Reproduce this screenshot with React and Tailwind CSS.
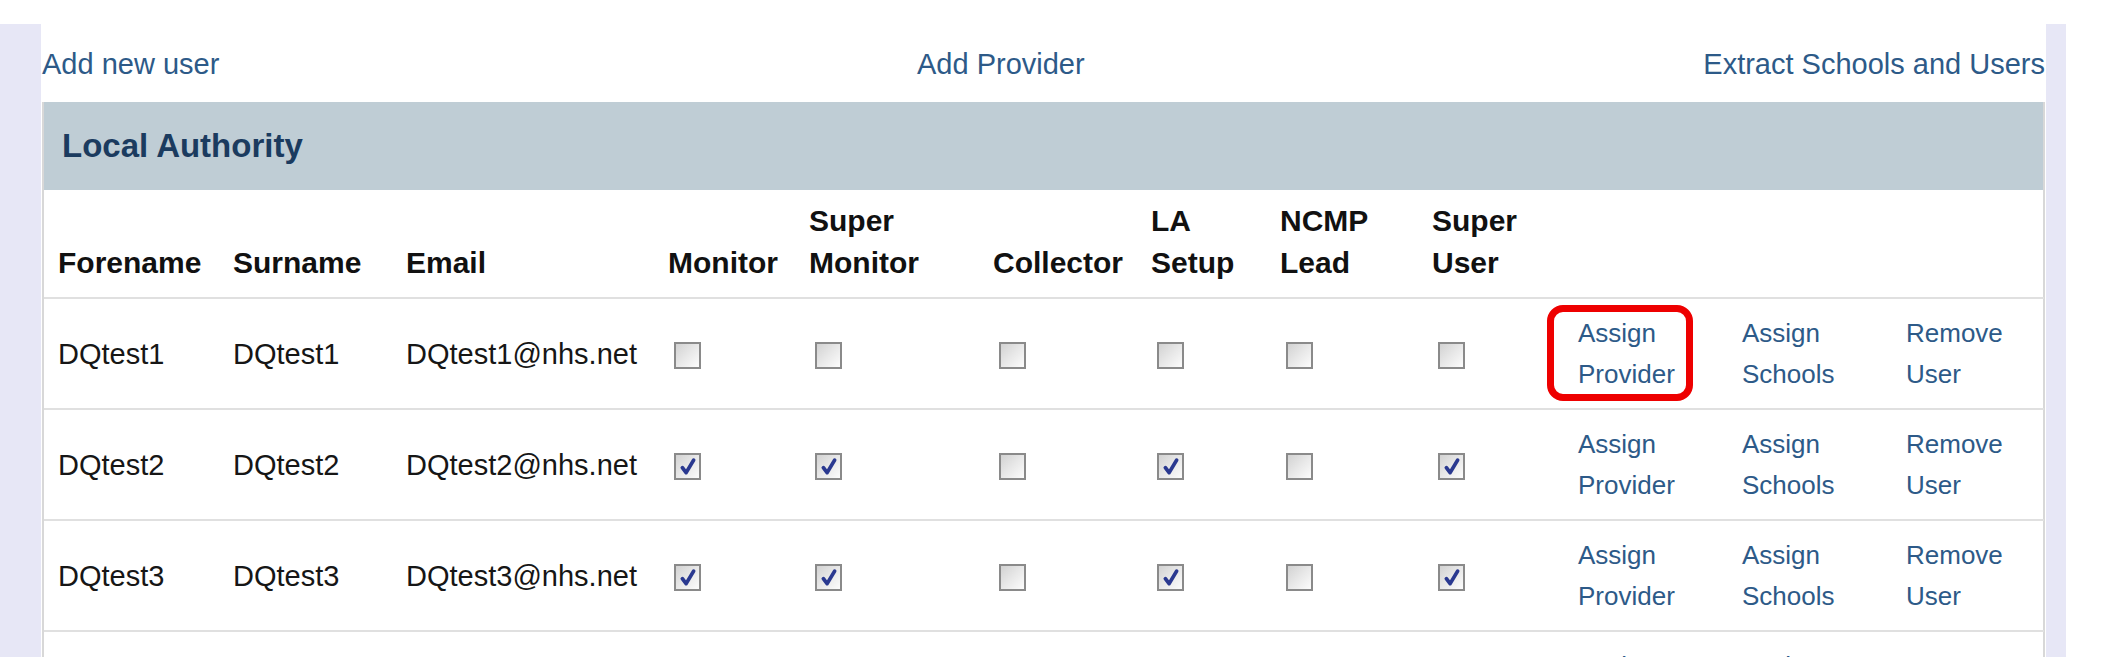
import React from "react";

const users = [
  { name: "DQtest1", flags: [false, false, false, false, false, false], marked: true },
  { name: "DQtest2", flags: [true, true, false, true, false, true] },
  { name: "DQtest3", flags: [true, true, false, true, false, true] },
  { name: "DQtest4", flags: [true, true, false, true, false, true] },
];

const roles = [
  ["Monitor"],
  ["Super", "Monitor"],
  ["Collector"],
  ["LA", "Setup"],
  ["NCMP", "Lead"],
  ["Super", "User"],
];

function Checkbox({ checked }) {
  return (
    <span className="inline-flex h-[27px] w-[27px] items-center justify-center border-2 border-[#8a8a8a] bg-gradient-to-br from-[#d2d2d2] via-[#e8e8e8] to-[#fcfcfc] align-middle">
      {checked && (
        <svg viewBox="0 0 16 16" className="h-[20px] w-[20px]">
          <path
            d="M3.5 8.5 L6.5 12.5 L12.5 2.5"
            fill="none"
            stroke="#2a3990"
            strokeWidth="3"
            strokeLinecap="round"
            strokeLinejoin="round"
          />
        </svg>
      )}
    </span>
  );
}

function ActionLink({ top, bottom, marked }) {
  return (
    <a href="#" className="relative inline-block text-[26px] leading-[41px] text-[#2d5a88]">
      {marked && (
        <span className="pointer-events-none absolute -left-[31px] -top-[8px] h-[96px] w-[146px] rounded-[16px] border-[7px] border-[#ee0000]" />
      )}
      {top}
      <br />
      {bottom}
    </a>
  );
}

export default function App() {
  return (
    <div className="min-h-screen bg-white pt-[24px] font-['Liberation_Sans',Arial,sans-serif] text-[29px] leading-[42px] text-[#161616]">
      <div className="flex min-h-[640px]">
        <div className="w-[41px] shrink-0 bg-[#e7e7f6]" />

        <div className="w-[2005px] shrink-0 px-[1px]">
          <div className="flex h-[78px] items-center pt-[2px] text-[#2d5a88]">
            <a href="#" className="w-[875px]">Add new user</a>
            <a href="#">Add Provider</a>
            <a href="#" className="ml-auto">Extract Schools and Users</a>
          </div>

          <div className="border-x-2 border-[#d8d8d8]">
            <div className="flex h-[88px] items-center bg-[#bfcdd5] pl-[18px] text-[33px] font-bold text-[#1b3b5f]">
              Local Authority
            </div>

            <table className="w-[2000px] table-fixed border-collapse">
              <colgroup>
                <col className="w-[174px]" />
                <col className="w-[173px]" />
                <col className="w-[262px]" />
                <col className="w-[141px]" />
                <col className="w-[184px]" />
                <col className="w-[158px]" />
                <col className="w-[129px]" />
                <col className="w-[152px]" />
                <col className="w-[146px]" />
                <col className="w-[164px]" />
                <col className="w-[164px]" />
                <col className="w-[153px]" />
              </colgroup>
              <thead>
                <tr className="h-[108px] border-b-2 border-[#e0e0e0] text-left align-bottom text-[30px] font-bold text-[#111]">
                  <th className="pb-[13px] pl-[14px]">Forename</th>
                  <th className="pb-[13px] pl-[15px]">Surname</th>
                  <th className="pb-[13px] pl-[15px]">Email</th>
                  {roles.map((r) => (
                    <th key={r.join(" ")} className="pb-[13px] pl-[15px] font-bold">
                      {r.map((line, i) => (
                        <div key={i}>{line}</div>
                      ))}
                    </th>
                  ))}
                  <th />
                  <th />
                  <th />
                </tr>
              </thead>
              <tbody>
                {users.map((u) => (
                  <tr key={u.name} className="h-[111px] border-b-2 border-[#e0e0e0] align-middle">
                    <td className="pl-[14px]">{u.name}</td>
                    <td className="pl-[15px]">{u.name}</td>
                    <td className="pl-[15px]">{u.name}@nhs.net</td>
                    {u.flags.map((f, i) => (
                      <td key={i} className="pl-[21px]">
                        <Checkbox checked={f} />
                      </td>
                    ))}
                    <td className="pl-[15px]">
                      <ActionLink top="Assign" bottom="Provider" marked={u.marked} />
                    </td>
                    <td className="pl-[15px]">
                      <ActionLink top="Assign" bottom="Schools" />
                    </td>
                    <td className="pl-[15px]">
                      <ActionLink top="Remove" bottom="User" />
                    </td>
                  </tr>
                ))}
              </tbody>
            </table>
          </div>
        </div>

        <div className="w-[20px] shrink-0 bg-[#e7e7f6]" />
      </div>
    </div>
  );
}
